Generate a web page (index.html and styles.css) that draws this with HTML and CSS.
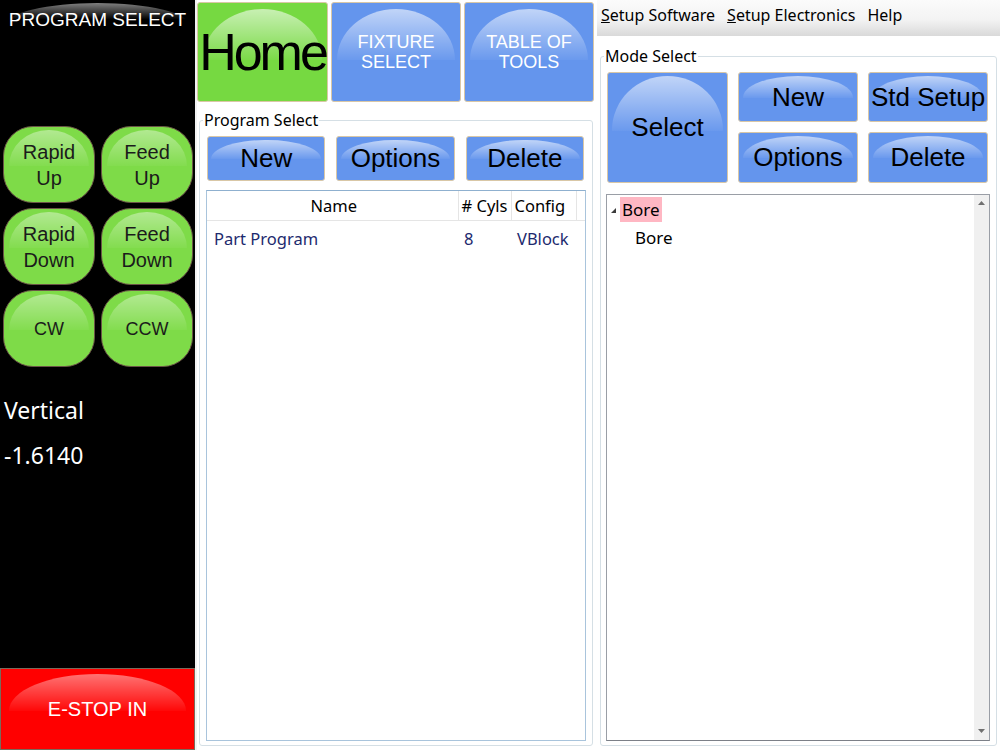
FILE: index.html
```html
<!DOCTYPE html>
<html lang="en">
<head>
    <meta charset="UTF-8">
    <meta name="viewport" content="width=device-width, initial-scale=1.0">
    <title>Program Select</title>
    <link rel="stylesheet" href="styles.css">
</head>
<body>
    <div class="screen">
        <aside class="sidebar">
            <div class="sidebar-title">PROGRAM SELECT</div>
            <div class="jog-grid">
                <button class="jog gloss">Rapid<br>Up</button>
                <button class="jog gloss">Feed<br>Up</button>
                <button class="jog gloss">Rapid<br>Down</button>
                <button class="jog gloss">Feed<br>Down</button>
                <button class="jog jog-small gloss">CW</button>
                <button class="jog jog-small gloss">CCW</button>
            </div>
            <div class="axis">
                <div>Vertical</div>
                <div>-1.6140</div>
            </div>
            <button class="estop gloss">E-STOP IN</button>
        </aside>

        <section class="middle">
            <nav class="tabs">
                <button class="tab tab-home gloss">Home</button>
                <button class="tab gloss">FIXTURE<br>SELECT</button>
                <button class="tab gloss">TABLE OF<br>TOOLS</button>
            </nav>
            <fieldset class="group program-group">
                <legend>Program Select</legend>
                <div class="btn-row">
                    <button class="btn gloss">New</button>
                    <button class="btn gloss">Options</button>
                    <button class="btn gloss">Delete</button>
                </div>
                <div class="list">
                    <table>
                        <colgroup>
                            <col class="col-name">
                            <col class="col-cyls">
                            <col class="col-config">
                            <col>
                        </colgroup>
                        <thead>
                            <tr>
                                <th class="center">Name</th>
                                <th># Cyls</th>
                                <th>Config</th>
                                <th></th>
                            </tr>
                        </thead>
                        <tbody>
                            <tr>
                                <td class="name">Part Program</td>
                                <td>8</td>
                                <td>VBlock</td>
                                <td></td>
                            </tr>
                        </tbody>
                    </table>
                </div>
            </fieldset>
        </section>

        <section class="right">
            <div class="menubar">
                <span class="menu-item"><u>S</u>etup Software</span>
                <span class="menu-item"><u>S</u>etup Electronics</span>
                <span class="menu-item">Help</span>
            </div>
            <fieldset class="group mode-group">
                <legend>Mode Select</legend>
                <div class="mode-grid">
                    <button class="btn btn-select gloss">Select</button>
                    <button class="btn gloss">New</button>
                    <button class="btn gloss">Std Setup</button>
                    <button class="btn gloss">Options</button>
                    <button class="btn gloss">Delete</button>
                </div>
                <div class="tree">
                    <div class="tree-body">
                        <div class="tree-row">
                            <svg class="expander" width="6" height="6" viewBox="0 0 6 6"><polygon points="5,0 5,5 0,5" fill="#3c3c3c"/></svg>
                            <span class="tree-label selected">Bore</span>
                        </div>
                        <div class="tree-row child">
                            <span class="tree-label">Bore</span>
                        </div>
                    </div>
                    <div class="scrollbar">
                        <svg width="7" height="4" viewBox="0 0 7 4"><polygon points="0,4 3.5,0 7,4" fill="#707070"/></svg>
                        <svg width="7" height="4" viewBox="0 0 7 4"><polygon points="0,0 7,0 3.5,4" fill="#707070"/></svg>
                    </div>
                </div>
            </fieldset>
        </section>
    </div>
</body>
</html>
```

FILE: styles.css
```css
body {
    margin: 0;
    background-color: #fff;
    font-family: "Noto Sans", "Open Sans", sans-serif;
    overflow: hidden;
}
button {
    font-family: "Liberation Sans", Arial, sans-serif;
    padding: 0;
    cursor: pointer;
}
.screen {
    display: flex;
    width: 1000px;
    height: 750px;
}

/* glossy highlight shared by all the big buttons */
.gloss {
    position: relative;
    z-index: 0;
    overflow: hidden;
}
.gloss::before {
    content: "";
    position: absolute;
    z-index: -1;
    left: 4%;
    right: 4%;
    top: 3px;
    height: 50%;
    border-radius: 50% 50% 0 0 / 100% 100% 0 0;
    background: linear-gradient(rgba(255, 255, 255, 0.6), rgba(255, 255, 255, 0.04));
}

/* left black column */
.sidebar {
    width: 197px;
    box-sizing: border-box;
    background-color: #000;
    border-right: 2px solid #f2f2f2;
    display: flex;
    flex-direction: column;
}
.sidebar-title {
    position: relative;
    z-index: 0;
    height: 40px;
    line-height: 40px;
    color: #fff;
    font-family: "Liberation Sans", Arial, sans-serif;
    font-size: 19px;
    text-align: center;
}
.sidebar-title::before {
    content: "";
    position: absolute;
    z-index: -1;
    left: 6px;
    right: 6px;
    top: 3px;
    height: 22px;
    border-radius: 50% 50% 0 0 / 100% 100% 0 0;
    background: linear-gradient(rgba(255, 255, 255, 0.5), rgba(255, 255, 255, 0) 75%);
}
.jog-grid {
    display: grid;
    grid-template-columns: 92px 92px;
    grid-auto-rows: 77px;
    column-gap: 6px;
    row-gap: 5px;
    padding-left: 3px;
    margin-top: 86px;
}
.jog {
    background-color: #7edb48;
    border: 1px solid #6a5646;
    border-radius: 30px;
    color: #1b1b1b;
    font-size: 20px;
    line-height: 26px;
}
.jog::before {
    left: 6%;
    right: 6%;
    top: 3px;
    height: 48%;
    background: linear-gradient(rgba(255, 255, 255, 0.4), rgba(255, 255, 255, 0.04));
}
.jog-small {
    font-size: 18px;
}
.axis {
    margin-top: 21px;
    padding-left: 4px;
    color: #fff;
    font-size: 23px;
    line-height: 45px;
}
.estop {
    margin-top: auto;
    height: 82px;
    width: 195px;
    background-color: #ff0000;
    border: 1px solid #7a6a5c;
    color: #fff;
    font-size: 20px;
}
.estop::before {
    left: 4%;
    right: 4%;
    top: 5px;
    height: 46%;
    background: linear-gradient(rgba(255, 255, 255, 0.45), rgba(255, 255, 255, 0.03));
}

/* middle column */
.middle {
    width: 400px;
    display: flex;
    flex-direction: column;
    padding-top: 2px;
    box-sizing: border-box;
}
.tabs {
    display: grid;
    grid-template-columns: 131px 130px 130px;
    column-gap: 3px;
    height: 100px;
}
.tab {
    background-color: #6495ed;
    border: 1px solid #d9c7a6;
    border-radius: 3px;
    color: #fff;
    font-size: 18px;
    line-height: 20px;
}
.tab::before {
    top: 6px;
    height: 52%;
}
.tab-home {
    background-color: #76d941;
    color: #000;
    font-size: 52px;
    letter-spacing: -3px;
    line-height: 60px;
}

.group {
    margin: 0;
    border: 1px solid #d5dfe5;
    border-radius: 3px;
    display: flex;
    flex-direction: column;
    min-width: 0;
}
.group legend {
    font-size: 16px;
    line-height: 20px;
    padding: 0 1px;
    margin-left: -3px;
    color: #000;
}
.program-group {
    flex: 1;
    margin: 8px 4px 4px 2px;
    padding: 6px 6px 4px 6px;
}
.btn-row {
    display: grid;
    grid-template-columns: repeat(3, 1fr);
    column-gap: 11px;
    height: 45px;
    padding: 0 2px 0 1px;
}
.btn {
    background-color: #6495ed;
    border: 1px solid #d9c7a6;
    border-radius: 3px;
    color: #000;
    font-size: 26px;
}
.btn::before {
    left: 3%;
    right: 3%;
    top: 3px;
    height: 45%;
}
.list {
    flex: 1;
    margin-top: 9px;
    border: 1px solid #a9c4dc;
    border-top-color: #8fb0cf;
    background-color: #fff;
}
table {
    width: 100%;
    border-collapse: collapse;
    table-layout: fixed;
    font-size: 16.5px;
}
.col-name {
    width: 251px;
}
.col-cyls {
    width: 53px;
}
.col-config {
    width: 65px;
}
th {
    height: 29px;
    font-weight: normal;
    color: #000;
    text-align: left;
    padding: 0 0 0 3px;
    border-right: 1px solid #e5e5e5;
    border-bottom: 1px solid #e5e5e5;
    white-space: nowrap;
    overflow: hidden;
}
th.center {
    text-align: center;
}
th:last-child {
    border-right: none;
}
td {
    height: 34px;
    color: #1d2a6e;
    padding: 0 0 0 6px;
    white-space: nowrap;
}
td.name {
    padding-left: 7px;
}

/* right column */
.right {
    flex: 1;
    display: flex;
    flex-direction: column;
}
.menubar {
    height: 36px;
    display: flex;
    gap: 12px;
    padding-left: 4px;
    background: linear-gradient(#fbfbfb 0%, #f3f3f3 55%, #d9d9d9 100%);
}
.menu-item {
    font-size: 16px;
    line-height: 30px;
    color: #000;
}
.mode-group {
    flex: 1;
    margin: 10px 3px 4px 3px;
    padding: 6px 6px 4px 6px;
}
.mode-grid {
    display: grid;
    grid-template-columns: 121px 120px 120px;
    grid-template-rows: 50px 51px;
    column-gap: 10px;
    row-gap: 10px;
}
.btn-select {
    grid-row: span 2;
}
.btn-select::before {
    height: 50%;
    top: 3px;
}
.tree {
    flex: 1;
    display: flex;
    margin: 11px 0 0 -1px;
    border: 1px solid #9a9ea6;
    border-bottom-color: #7c8088;
    background-color: #fff;
}
.tree-body {
    flex: 1;
    padding: 2px 0 0 4px;
    font-size: 17px;
}
.tree-row {
    display: flex;
    align-items: center;
    height: 25px;
    margin-bottom: 3px;
    color: #000;
}
.expander {
    margin: 3px 3px 0 0;
}
.tree-label {
    padding: 0 2px;
    line-height: 25px;
}
.selected {
    background-color: #ffb7c3;
}
.child {
    padding-left: 22px;
}
.scrollbar {
    width: 15px;
    background-color: #f0f0f0;
    display: flex;
    flex-direction: column;
    justify-content: space-between;
    align-items: center;
    padding: 6px 0 7px 0;
}
```
